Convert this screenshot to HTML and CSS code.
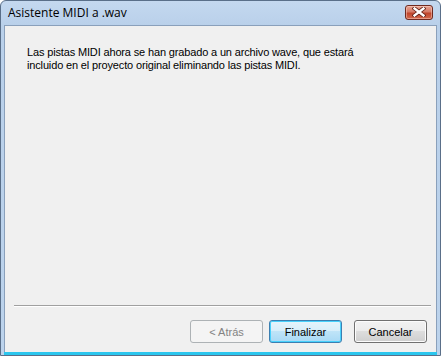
FILE: index.html
```html
<!DOCTYPE html>
<html>
<head>
<meta charset="utf-8">
<link rel="stylesheet" href="styles.css">
</head>
<body>
<div class="window">
  <div class="titlebar">
    <span class="title">Asistente MIDI a .wav</span>
    <div class="close">
      <svg width="14" height="10" viewBox="0 0 14 10"><path d="M2.5 1.5 L11.5 8.5 M11.5 1.5 L2.5 8.5" stroke="#5a1a10" stroke-width="4" stroke-linecap="square"/><path d="M2.5 1.5 L11.5 8.5 M11.5 1.5 L2.5 8.5" stroke="#fff" stroke-width="2.4" stroke-linecap="square"/></svg>
    </div>
  </div>
  <div class="client">
    <div class="body">
      <p class="msg">Las pistas MIDI ahora se han grabado a un archivo wave, que estará<br>incluido en el proyecto original eliminando las pistas MIDI.</p>
    </div>
    <div class="sep"></div>
    <div class="buttons">
      <button class="btn disabled">&lt; Atrás</button>
      <button class="btn default">Finalizar</button>
      <button class="btn cancel">Cancelar</button>
    </div>
  </div>
</div>
</body>
</html>
```
FILE: styles.css
```css
html, body { margin: 0; padding: 0; }
body { width: 441px; height: 356px; overflow: hidden; background: #fff; }
.window {
  box-sizing: border-box;
  width: 441px; height: 356px;
  border: 1px solid #5a6f89;
  border-radius: 6px 6px 0 0;
  background: linear-gradient(#c4d8ef, #b9d0ea 25px, #bcd3ec);
  display: flex; flex-direction: column;
  padding: 0 3px 3px 3px;
  font-family: "Liberation Sans", Arial, sans-serif;
}
.titlebar {
  height: 24px;
  display: flex; align-items: center; justify-content: space-between;
  padding-left: 4px; padding-right: 4px;
}
.title { font-family: "Open Sans", "Noto Sans", sans-serif; font-size: 12px; color: #000; margin-top: -2px; }
.close {
  width: 28px; height: 15px; margin-top: -2px;
  box-sizing: border-box;
  border: 1px solid #6f2a20;
  border-radius: 3px;
  background: linear-gradient(#e8a493, #d57a66 45%, #c0452c 55%, #d36a4e);
  display: flex; align-items: center; justify-content: center;
  box-shadow: inset 0 0 0 1px rgba(255,220,210,0.45);
}
.client {
  flex: 1;
  background: #f0f0f0;
  border: 1px solid #8aa0bb;
  border-bottom: 0;
  display: flex; flex-direction: column;
  box-shadow: 0 3px 0 0 #2bc6ee;
}
.body { flex: 1; padding: 20px 22px 0 22px; }
.msg { margin: 0; font-size: 11px; line-height: 13px; color: #000; letter-spacing: -0.15px; }
.sep { height: 0; border-top: 1px solid #a0a0a0; border-bottom: 1px solid #fff; margin: 0 5px 0 9px; }
.buttons { display: flex; justify-content: flex-end; padding: 13px 9px 9px 0; gap: 6px; }
.btn {
  width: 73px; height: 23px;
  font-family: "Liberation Sans", Arial, sans-serif; font-size: 11px;
  border: 1px solid #707070; border-radius: 3px;
  background: linear-gradient(#f2f2f2, #ebebeb 50%, #dddddd 50%, #cfcfcf);
  color: #000; padding: 0;
  box-shadow: inset 0 0 0 1px #fcfcfc;
}
.btn.disabled { border-color: #adb2b5; background: #f4f4f4; color: #838383; box-shadow: none; }
.btn.default { border-color: #3c7fb1; background: linear-gradient(#e5f4fc, #d6eefa 50%, #bfe4f8 50%, #a8d9f5); box-shadow: inset 0 0 0 1px #48d1fc; }
.btn.cancel { margin-left: 6px; }
```
